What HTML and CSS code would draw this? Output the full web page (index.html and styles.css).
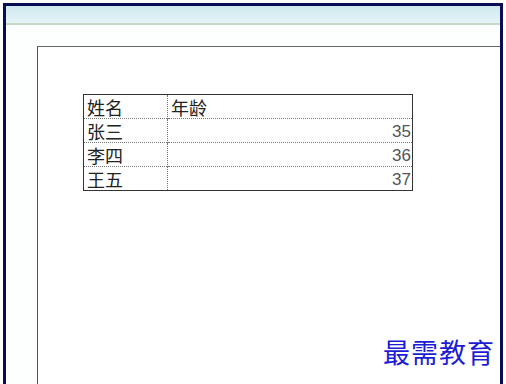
FILE: index.html
```html
<!DOCTYPE html>
<html>
<head>
<meta charset="utf-8">
<link rel="stylesheet" href="styles.css">
</head>
<body>
<div class="screen">
  <div class="header"></div>
  <div class="content">
    <div class="page">
      <table class="sheet">
        <tr><td class="name">姓名</td><td class="age head">年龄</td></tr>
        <tr><td class="name">张三</td><td class="age">35</td></tr>
        <tr><td class="name">李四</td><td class="age">36</td></tr>
        <tr><td class="name">王五</td><td class="age">37</td></tr>
      </table>
    </div>
  </div>
  <div class="watermark">最需教育</div>
</div>
</body>
</html>
```

FILE: styles.css
```css
html, body {
  margin: 0;
  padding: 0;
  background: #ffffff;
  width: 506px;
  height: 384px;
  overflow: hidden;
}
.screen {
  position: relative;
  margin: 3px 0 0 3px;
  width: 494px;
  height: 390px;
  border: 3px solid #0c0c55;
  border-bottom: none;
  background: #fdfefe;
  display: flex;
  flex-direction: column;
}
.header {
  height: 17px;
  background: linear-gradient(to bottom, #cfe9f0 0%, #e4f3f6 100%);
  border-bottom: 2px solid #c5d9c3;
  flex: none;
}
.content {
  flex: 1;
  padding: 21px 0 0 31px;
  display: flex;
}
.page {
  flex: 1;
  background: #ffffff;
  border-left: 1px solid #555;
  border-top: 1px solid #666;
  padding: 47px 0 0 45px;
}
.sheet {
  border-collapse: collapse;
  border: 1px solid #333;
  width: 330px;
  font-family: "Noto Sans CJK SC", sans-serif;
}
.sheet td {
  box-sizing: border-box;
  height: 24px;
  padding: 0;
  border-top: 1px dotted #777;
  line-height: 20px;
}
.sheet td.name {
  width: 84px;
  padding-left: 3px;
  border-right: 1px dotted #777;
  font-size: 18px;
  color: #222;
}
.sheet td.age {
  text-align: right;
  padding-right: 1px;
  font-family: "Liberation Sans", Arial, sans-serif;
  font-size: 17px;
  line-height: 18px;
  color: #555;
  padding-top: 3px;
}
.sheet td.age.head {
  text-align: left;
  padding-left: 3px;
  padding-top: 0;
  line-height: 20px;
  font-family: "Noto Sans CJK SC", sans-serif;
  font-size: 18px;
  color: #222;
}
.watermark {
  position: absolute;
  left: 377px;
  top: 332px;
  font-family: "Noto Sans CJK SC", serif;
  font-weight: 400;
  font-size: 27px;
  line-height: 27px;
  letter-spacing: 1px;
  color: #1c1cd6;
}
```
